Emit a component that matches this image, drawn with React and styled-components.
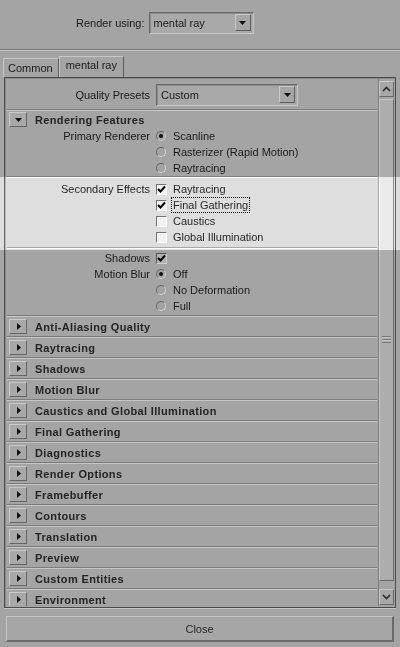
import React from 'react';
import styled, { createGlobalStyle } from 'styled-components';

const GlobalStyle = createGlobalStyle`
  body {
    margin: 0;
    background: #a4a4a4;
  }
  * { box-sizing: border-box; }
`;

const sections = [
  'Anti-Aliasing Quality',
  'Raytracing',
  'Shadows',
  'Motion Blur',
  'Caustics and Global Illumination',
  'Final Gathering',
  'Diagnostics',
  'Render Options',
  'Framebuffer',
  'Contours',
  'Translation',
  'Preview',
  'Custom Entities',
  'Environment',
];

const Tri = ({ dir }) => (
  <svg width="7" height="7" viewBox="0 0 7 7">
    {dir === 'down'
      ? <polygon points="0,2 7,2 3.5,6" fill="#111" />
      : <polygon points="2,0 6,3.5 2,7" fill="#111" />}
  </svg>
);

const Chevron = ({ up }) => (
  <svg width="9" height="6" viewBox="0 0 9 6">
    <polyline
      points={up ? '1,5 4.5,1.5 8,5' : '1,1 4.5,4.5 8,1'}
      fill="none"
      stroke="#2a2a2a"
      strokeWidth="1.6"
    />
  </svg>
);

const Check = () => (
  <svg width="9" height="9" viewBox="0 0 9 9">
    <polyline points="1,4 3.5,6.5 8,1.5" fill="none" stroke="#000" strokeWidth="2" />
  </svg>
);

const Dropdown = ({ value, width }) => (
  <Combo width={width}>
    <ComboText>{value}</ComboText>
    <ComboButton><Tri dir="down" /></ComboButton>
  </Combo>
);

const Radio = ({ on, label }) => (
  <Choice>
    <RadioDot on={on} />
    <span>{label}</span>
  </Choice>
);

const CheckBox = ({ on, label, focused }) => (
  <Choice gap={6}>
    <Box>{on && <Check />}</Box>
    <ChoiceLabel focused={focused}>{label}</ChoiceLabel>
  </Choice>
);

export default function App() {
  return (
    <Window>
      <GlobalStyle />
      <TopBar>
        <span>Render using:</span>
        <Dropdown value="mental ray" width={105} />
      </TopBar>

      <TabBar>
        <Tab>Common</Tab>
        <Tab active>mental ray</Tab>
      </TabBar>

      <Frame>
        <Content>
          <FormRow height={29}>
            <Label>Quality Presets</Label>
            <Dropdown value="Custom" width={142} />
          </FormRow>

          <Header>
            <ArrowButton><Tri dir="down" /></ArrowButton>
            <Title>Rendering Features</Title>
          </Header>

          <Group>
            <FormRow><Label>Primary Renderer</Label><Radio on label="Scanline" /></FormRow>
            <FormRow><span /><Radio label="Rasterizer (Rapid Motion)" /></FormRow>
            <FormRow><span /><Radio label="Raytracing" /></FormRow>
          </Group>
          <Groove />
          <Group pad="3px 0 2px">
            <FormRow><Label>Secondary Effects</Label><CheckBox on label="Raytracing" /></FormRow>
            <FormRow><span /><CheckBox on focused label="Final Gathering" /></FormRow>
            <FormRow><span /><CheckBox label="Caustics" /></FormRow>
            <FormRow><span /><CheckBox label="Global Illumination" /></FormRow>
          </Group>
          <Groove />
          <Group pad="1px 0 1px">
            <FormRow><Label>Shadows</Label><CheckBox on label="" /></FormRow>
            <FormRow><Label>Motion Blur</Label><Radio on label="Off" /></FormRow>
            <FormRow><span /><Radio label="No Deformation" /></FormRow>
            <FormRow><span /><Radio label="Full" /></FormRow>
          </Group>

          {sections.map(s => (
            <Header key={s} tall>
              <ArrowButton><Tri dir="right" /></ArrowButton>
              <Title>{s}</Title>
            </Header>
          ))}
        </Content>

        <ScrollBar>
          <ScrollButton><Chevron up /></ScrollButton>
          <Thumb>
            <Grip />
          </Thumb>
          <ScrollButton><Chevron /></ScrollButton>
        </ScrollBar>
      </Frame>

      <Footer>
        <CloseButton>Close</CloseButton>
      </Footer>

      <Highlight />
    </Window>
  );
}

const Window = styled.div`
  position: relative;
  width: 400px;
  height: 647px;
  background: #a4a4a4;
  font-family: "Liberation Sans", Arial, sans-serif;
  font-size: 11px;
  color: #1a1a1a;
  display: flex;
  flex-direction: column;
  overflow: hidden;
  isolation: isolate;
`;

const TopBar = styled.div`
  height: 50px;
  flex-shrink: 0;
  display: flex;
  align-items: center;
  gap: 4px;
  padding: 0 0 4px 76px;
  border-bottom: 1px solid #7c7c7c;
  box-shadow: 0 1px 0 #c2c2c2;
`;

const Combo = styled.div`
  width: ${({ width }) => width}px;
  height: 22px;
  display: flex;
  align-items: center;
  background: #a9a9a9;
  border: 1px solid;
  border-color: #6a6a6a #c8c8c8 #c8c8c8 #6a6a6a;
  box-shadow: inset 1px 1px 0 #8c8c8c;
  padding: 1px 2px 1px 4px;
`;

const ComboText = styled.span`
  flex: 1;
`;

const ComboButton = styled.div`
  width: 16px;
  height: 17px;
  display: flex;
  align-items: center;
  justify-content: center;
  background: #a6a6a6;
  border: 1px solid;
  border-color: #cacaca #5e5e5e #5e5e5e #cacaca;
`;

const TabBar = styled.div`
  height: 27px;
  flex-shrink: 0;
  display: flex;
  align-items: flex-end;
  padding-left: 3px;
`;

const Tab = styled.div`
  height: ${({ active }) => (active ? 21 : 19)}px;
  padding: ${({ active }) => (active ? '2px 6px 0 6px' : '3px 5px 0 4px')};
  border-top: 1px solid #c6c6c6;
  border-left: 1px solid #c6c6c6;
  border-right: 1px solid #5c5c5c;
  color: #1a1a1a;
`;

const Frame = styled.div`
  height: 531px;
  flex-shrink: 0;
  margin: 0 4px;
  display: flex;
  border: 1px solid #4c4c4c;
  box-shadow: inset 1px 1px 0 #8a8a8a, 0 1px 0 #c4c4c4;
  padding: 1px 1px 1px 2px;
`;

const Content = styled.div`
  flex: 1;
  overflow: hidden;
  display: flex;
  flex-direction: column;
  padding-top: 1px;
`;

const FormRow = styled.div`
  flex-shrink: 0;
  height: ${({ height }) => height || 16}px;
  display: grid;
  grid-template-columns: 143px 1fr;
  column-gap: 6px;
  align-items: center;
`;

const Label = styled.span`
  text-align: right;
`;

const Group = styled.div`
  flex-shrink: 0;
  padding: ${({ pad }) => pad || '0'};
`;

const Groove = styled.div`
  flex-shrink: 0;
  height: 2px;
  margin-right: 1px;
  border-top: 1px solid #7c7c7c;
  border-bottom: 1px solid #c6c6c6;
`;

const Header = styled.div`
  flex-shrink: 0;
  height: ${({ tall }) => (tall ? 21 : 19)}px;
  display: flex;
  align-items: center;
  gap: 8px;
  padding: 1px 0 0 2px;
  margin-right: 1px;
  border-top: 1px solid #7c7c7c;
  box-shadow: inset 0 1px 0 #c6c6c6;
`;

const ArrowButton = styled.div`
  width: 18px;
  height: 15px;
  display: flex;
  align-items: center;
  justify-content: center;
  background: #a8a8a8;
  border: 1px solid;
  border-color: #cacaca #666 #666 #cacaca;
`;

const Title = styled.span`
  font-weight: bold;
  letter-spacing: 0.35px;
  color: #242424;
`;

const Choice = styled.div`
  display: flex;
  align-items: center;
  gap: ${({ gap }) => gap || 7}px;
`;

const ChoiceLabel = styled.span`
  padding: 0 1px;
  margin-left: -1px;
  outline: ${({ focused }) => (focused ? '1px dotted #000' : 'none')};
  line-height: 14px;
`;

const RadioDot = styled.span`
  width: 10px;
  height: 10px;
  border-radius: 50%;
  border: 1px solid;
  border-color: #666 #cfcfcf #cfcfcf #666;
  background: #a4a4a4;
  display: flex;
  align-items: center;
  justify-content: center;
  &::after {
    content: '';
    width: 4px;
    height: 4px;
    border-radius: 50%;
    background: ${({ on }) => (on ? '#111' : 'transparent')};
  }
`;

const Box = styled.span`
  width: 11px;
  height: 11px;
  display: flex;
  align-items: center;
  justify-content: center;
  background: #b2b2b2;
  border: 1px solid;
  border-color: #555 #cdcdcd #cdcdcd #555;
`;

const ScrollBar = styled.div`
  width: 16px;
  flex-shrink: 0;
  display: flex;
  flex-direction: column;
  gap: 2px;
  padding: 2px 0 1px;
  border-left: 1px solid #7a7a7a;
`;

const ScrollButton = styled.div`
  height: 16px;
  flex-shrink: 0;
  display: flex;
  align-items: center;
  justify-content: center;
  background: #a8a8a8;
  border: 1px solid;
  border-color: #c8c8c8 #6a6a6a #6a6a6a #c8c8c8;
`;

const Thumb = styled.div`
  flex: 1;
  margin-bottom: 6px;
  display: flex;
  align-items: center;
  justify-content: center;
  background: #adadad;
  border: 1px solid;
  border-color: #c6c6c6 #6a6a6a #6a6a6a #c6c6c6;
`;

const Grip = styled.div`
  width: 9px;
  height: 7px;
  margin-top: -2px;
  background: repeating-linear-gradient(
    to bottom,
    #7a7a7a 0 1px,
    #c4c4c4 1px 2px,
    transparent 2px 3px
  );
`;

const Footer = styled.div`
  flex: 1;
  padding: 8px 6px 6px;
`;

const CloseButton = styled.div`
  height: 26px;
  display: flex;
  align-items: center;
  justify-content: center;
  color: #2a2a2a;
  background: #a6a6a6;
  border-top: 1px solid #c6c6c6;
  border-left: 1px solid #c6c6c6;
  border-right: 2px solid #6a6a6a;
  border-bottom: 2px solid #6a6a6a;
`;

const Highlight = styled.div`
  position: absolute;
  left: 0;
  right: 0;
  top: 177px;
  height: 73px;
  background: #434343;
  mix-blend-mode: color-dodge;
  pointer-events: none;
`;
